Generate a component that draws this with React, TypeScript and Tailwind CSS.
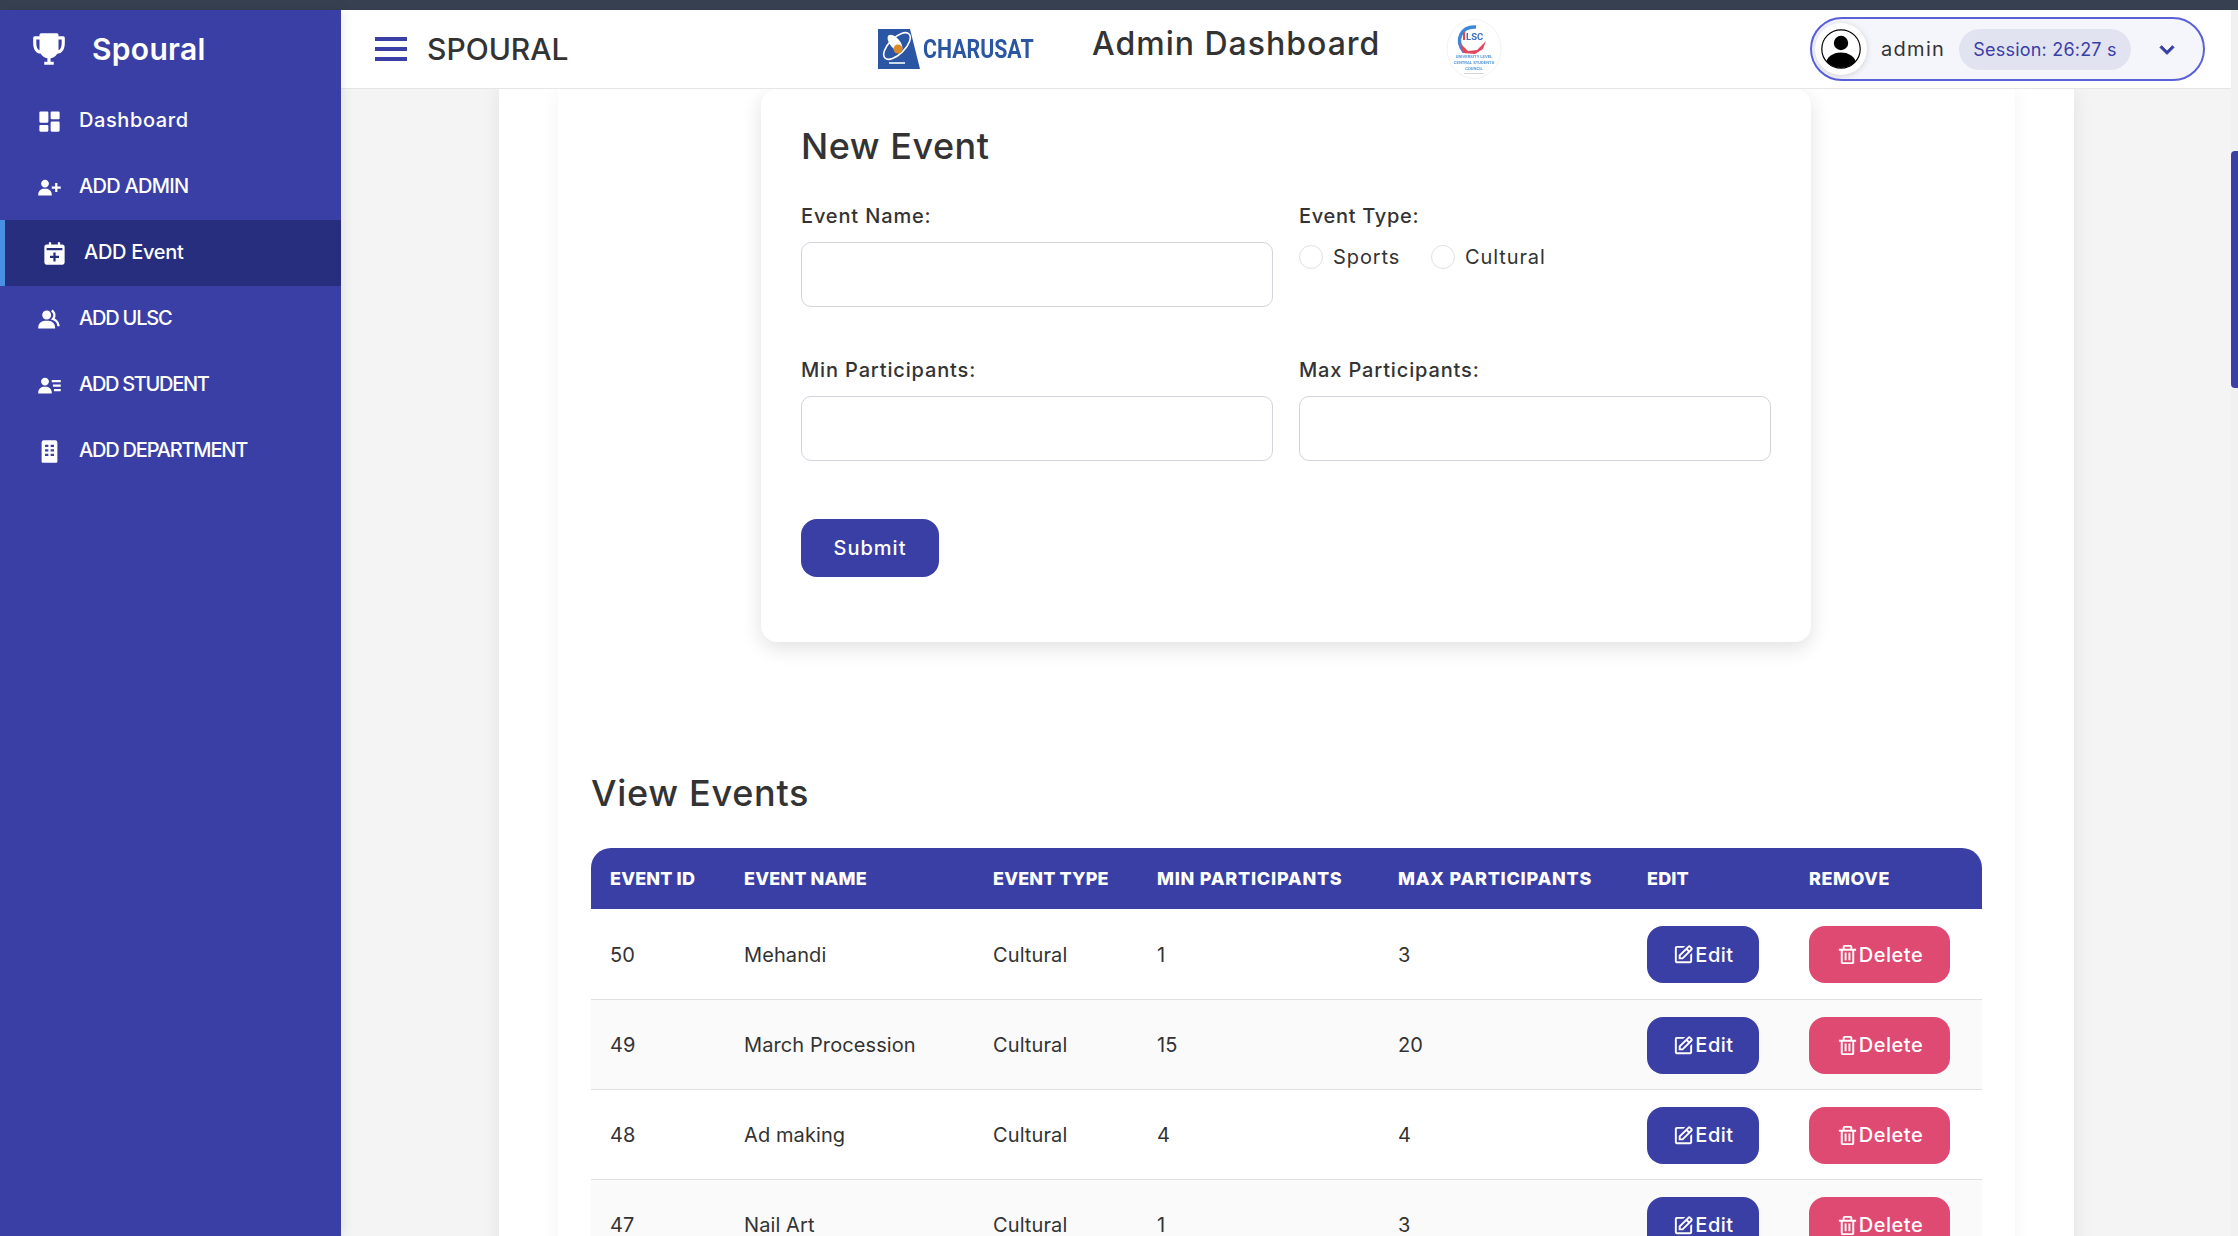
import React from "react";
import {
  BiSolidTrophy,
  BiSolidDashboard,
  BiSolidUserPlus,
  BiSolidCalendarPlus,
  BiSolidGroup,
  BiSolidUserDetail,
  BiSolidBuilding,
  BiMenu,
  BiChevronDown,
  BiEdit,
  BiTrash,
} from "react-icons/bi";

const navItems = [
  { label: "Dashboard", icon: BiSolidDashboard, track: "tracking-[0.6px]" },
  { label: "ADD ADMIN", icon: BiSolidUserPlus, track: "tracking-[-0.7px]" },
  { label: "ADD Event", icon: BiSolidCalendarPlus, track: "tracking-[-0.3px]", active: true },
  { label: "ADD ULSC", icon: BiSolidGroup, track: "tracking-[-1.2px]" },
  { label: "ADD STUDENT", icon: BiSolidUserDetail, track: "tracking-[-1.3px]" },
  { label: "ADD DEPARTMENT", icon: BiSolidBuilding, track: "tracking-[-1.2px]" },
];

const events = [
  { id: 50, name: "Mehandi", type: "Cultural", min: 1, max: 3 },
  { id: 49, name: "March Procession", type: "Cultural", min: 15, max: 20 },
  { id: 48, name: "Ad making", type: "Cultural", min: 4, max: 4 },
  { id: 47, name: "Nail Art", type: "Cultural", min: 1, max: 3 },
];

function CharusatLogo() {
  return (
    <div className="flex items-center gap-[3px] w-[154px] h-[40px] shrink-0">
      <svg width="42" height="40" viewBox="0 0 42 40" className="shrink-0">
        <polygon points="0,0 32,0 42,40 0,40" fill="#2a56a4" />
        <ellipse cx="19" cy="17" rx="17" ry="8" fill="none" stroke="#fff" strokeWidth="1.6" transform="rotate(-45 19 17)" />
        <ellipse cx="17" cy="14" rx="5" ry="10" fill="#fff" transform="rotate(-40 17 14)" />
        <circle cx="20" cy="20" r="4.5" fill="#d98a2b" />
        <rect x="11" y="33" width="16" height="2" fill="#cfd9ee" />
      </svg>
      <span className="font-[Roboto,sans-serif] font-bold text-[26px] leading-none text-[#2a56a4] tracking-normal scale-x-[0.82] origin-left whitespace-nowrap">
        CHARUSAT
      </span>
    </div>
  );
}

function UlscLogo() {
  return (
    <svg width="60" height="60" viewBox="0 0 60 60" className="shrink-0 blur-[0.4px]">
      <ellipse cx="30" cy="30" rx="27" ry="29.5" fill="#fff" stroke="#f2f2f2" />
      <path d="M32 8 C18 7 10 20 20 33" fill="none" stroke="#3f86d8" strokeWidth="3.5" />
      <text x="22" y="21" fontSize="9.5" fontWeight="700" fill="#3a6fc4" fontFamily="Roboto, sans-serif">
        LSC
      </text>
      <rect x="19" y="13" width="2" height="8" fill="#e0484f" />
      <path d="M16 24 L24 32 L33 31 L42 22 L39 30 L31 35 L19 34 Z" fill="#e0485f" />
      <text x="30" y="39" textAnchor="middle" fontSize="4.2" fontWeight="700" fill="#5a9ad8" fontFamily="Roboto, sans-serif">
        UNIVERSITY LEVEL
      </text>
      <text x="30" y="45" textAnchor="middle" fontSize="4.2" fontWeight="700" fill="#5a9ad8" fontFamily="Roboto, sans-serif">
        CENTRAL STUDENTS
      </text>
      <text x="30" y="51" textAnchor="middle" fontSize="4.2" fontWeight="700" fill="#5a9ad8" fontFamily="Roboto, sans-serif">
        COUNCIL
      </text>
      <rect x="20" y="54" width="20" height="1" fill="#d5d5d5" />
    </svg>
  );
}

function Avatar() {
  return (
    <svg width="40" height="40" viewBox="0 0 40 40">
      <defs>
        <clipPath id="avatar-clip">
          <circle cx="20" cy="20" r="19" />
        </clipPath>
      </defs>
      <circle cx="20" cy="20" r="19.2" fill="#fff" stroke="#000" strokeWidth="1.2" />
      <circle cx="20" cy="14" r="7.2" fill="#000" />
      <ellipse cx="20" cy="35" rx="15" ry="11.5" fill="#000" clipPath="url(#avatar-clip)" />
    </svg>
  );
}

function Field({ label }: { label: string }) {
  return (
    <div className="flex flex-col">
      <label className="text-[20px] leading-[32px] font-medium text-[#333] mb-[10px] tracking-[0.85px]">{label}</label>
      <input type="text" className="h-[65px] w-full rounded-[10px] border border-[#d1d5db] bg-white" />
    </div>
  );
}

export default function App() {
  return (
    <div className="h-screen w-full overflow-hidden flex flex-col bg-[#f4f4f4] text-[#333] font-[Inter,sans-serif]">
      <div className="h-[10px] shrink-0 bg-[#374050]" />
      <div className="flex flex-1 min-h-0">
        {/* Sidebar */}
        <aside className="w-[341px] shrink-0 bg-[#3a3fa6] text-white z-20 shadow-[2px_0_12px_rgba(0,0,0,0.08)]">
          <div className="h-[78px] flex items-center pl-[30px] gap-[24px]">
            <BiSolidTrophy className="text-[38px]" />
            <span className="text-[30px] font-semibold tracking-[0.3px]">Spoural</span>
          </div>
          {navItems.map((item) => {
            const Icon = item.icon;
            return (
              <div
                key={item.label}
                className={
                  item.active
                    ? "h-[66px] flex items-center gap-[16px] pl-[36px] bg-[#282e7e] border-l-[5px] border-[#4a90e2]"
                    : "h-[66px] flex items-center gap-[16px] pl-[36px]"
                }
              >
                <Icon className="text-[27px] shrink-0" />
                <span className={"text-[20px] font-medium mb-[2px] " + item.track}>{item.label}</span>
              </div>
            );
          })}
        </aside>

        <div className="flex-1 min-w-0 flex flex-col">
          {/* Header */}
          <header className="h-[79px] shrink-0 bg-white flex items-center border-b border-[#e5e5e5] z-10 relative pl-[26px] pr-[26px]">
            <BiMenu className="text-[48px] text-[#3a3fa6] shrink-0" />
            <span className="ml-[12px] text-[30px] font-medium w-[451px] shrink-0">SPOURAL</span>
            <CharusatLogo />
            <span className="ml-[60px] text-[32px] font-medium mb-[10px] w-[352px] shrink-0 whitespace-nowrap tracking-[1px]">
              Admin Dashboard
            </span>
            <UlscLogo />
            <div className="ml-auto w-[395px] h-[64px] rounded-full border-2 border-[#5a60d8] bg-[#f5f6fb] flex items-center pl-[3px] shrink-0">
              <div className="w-[52px] h-[52px] rounded-full bg-white shadow-[0_1px_6px_rgba(0,0,0,0.15)] flex items-center justify-center">
                <Avatar />
              </div>
              <span className="ml-[14px] text-[20px] text-[#333] w-[78px] tracking-[1.3px]">admin</span>
              <div className="h-[41px] w-[172px] rounded-full bg-[#e2e3f0] flex items-center justify-center text-[18px] text-[#3a3fa6] whitespace-nowrap tracking-[0.2px]">
                Session: 26:27 s
              </div>
              <BiChevronDown className="ml-[21px] text-[30px] text-[#3a3fa6]" stroke="currentColor" strokeWidth={0.6} />
            </div>
          </header>

          {/* Main */}
          <main className="flex-1 min-h-0 overflow-hidden">
            <div className="w-[1575px] ml-[158px] bg-white px-[59px] shadow-[0_0_18px_rgba(0,0,0,0.08)]">
              <div className="bg-white px-[33px] shadow-[0_0_18px_rgba(0,0,0,0.05)]">
                <div className="w-[1050px] ml-[170px] rounded-[16px] bg-white px-[40px] pt-[30px] pb-[65px] shadow-[0_6px_20px_rgba(0,0,0,0.12)]">
                  <h2 className="text-[36px] leading-[54px] font-medium mb-[27px] tracking-[0.5px]">New Event</h2>
                  <div className="grid grid-cols-2 gap-x-[26px] gap-y-[47px]">
                    <Field label="Event Name:" />
                    <div>
                      <label className="block text-[20px] leading-[32px] font-medium text-[#333] mb-[10px] tracking-[0.7px]">
                        Event Type:
                      </label>
                      <div className="flex items-center text-[20px] leading-[30px] mt-[5px] tracking-[0.9px]">
                        <span className="w-[24px] h-[24px] rounded-full border border-[#e0e0e0] mr-[10px]" />
                        <span className="w-[98px]">Sports</span>
                        <span className="w-[24px] h-[24px] rounded-full border border-[#e0e0e0] mr-[10px]" />
                        <span>Cultural</span>
                      </div>
                    </div>
                    <Field label="Min Participants:" />
                    <Field label="Max Participants:" />
                  </div>
                  <button className="mt-[58px] h-[58px] w-[138px] rounded-[16px] bg-[#3a3fa6] text-white text-[20px] font-medium tracking-[1px]">
                    Submit
                  </button>
                </div>

                <h2 className="mt-[124px] mb-[28px] text-[36px] leading-[54px] font-medium tracking-[0.7px]">View Events</h2>

                <table className="w-[1391px] table-fixed border-collapse text-[20px] tracking-[0.1px]">
                  <colgroup>
                    <col className="w-[134px]" />
                    <col className="w-[249px]" />
                    <col className="w-[164px]" />
                    <col className="w-[241px]" />
                    <col className="w-[249px]" />
                    <col className="w-[161px]" />
                    <col className="w-[193px]" />
                  </colgroup>
                  <thead>
                    <tr className="h-[61px] bg-[#3a3fa6] text-white text-left text-[18px] font-extrabold tracking-[0.15px]">
                      <th className="pl-[19px] rounded-tl-[20px] font-extrabold">EVENT ID</th>
                      <th className="pl-[19px] font-extrabold">EVENT NAME</th>
                      <th className="pl-[19px] font-extrabold">EVENT TYPE</th>
                      <th className="pl-[19px] font-extrabold tracking-[0.75px]">MIN PARTICIPANTS</th>
                      <th className="pl-[19px] font-extrabold tracking-[0.75px]">MAX PARTICIPANTS</th>
                      <th className="pl-[19px] font-extrabold">EDIT</th>
                      <th className="pl-[20px] rounded-tr-[20px] font-extrabold tracking-[0.5px]">REMOVE</th>
                    </tr>
                  </thead>
                  <tbody>
                    {events.map((ev, i) => (
                      <tr
                        key={ev.id}
                        className={
                          i % 2 === 1
                            ? "h-[90px] bg-[#fafafa] border-b border-[#e0e0e0]"
                            : "h-[90px] bg-white border-b border-[#e0e0e0]"
                        }
                      >
                        <td className="pl-[19px] pt-[2px]">{ev.id}</td>
                        <td className="pl-[19px] pt-[2px]">{ev.name}</td>
                        <td className="pl-[19px] pt-[2px]">{ev.type}</td>
                        <td className="pl-[19px] pt-[2px]">{ev.min}</td>
                        <td className="pl-[19px] pt-[2px]">{ev.max}</td>
                        <td className="pl-[19px] pt-[2px]">
                          <button className="h-[57px] w-[112px] rounded-[16px] bg-[#3a3fa6] text-white text-[20px] font-medium tracking-[0.5px] flex items-center justify-center">
                            <BiEdit className="text-[23px] shrink-0" />
                            Edit
                          </button>
                        </td>
                        <td className="pl-[20px] pt-[2px]">
                          <button className="h-[57px] w-[141px] rounded-[16px] bg-[#df4a72] text-white text-[20px] font-medium tracking-[0.5px] flex items-center justify-center">
                            <BiTrash className="text-[23px] shrink-0" />
                            Delete
                          </button>
                        </td>
                      </tr>
                    ))}
                  </tbody>
                </table>
              </div>
            </div>
          </main>
        </div>

        {/* Scrollbar */}
        <div className="w-[7px] shrink-0 bg-[#f1f1f1] z-20">
          <div className="mt-[141px] h-[237px] bg-[#3a3fa6] rounded-l-[4px]" />
        </div>
      </div>
    </div>
  );
}
